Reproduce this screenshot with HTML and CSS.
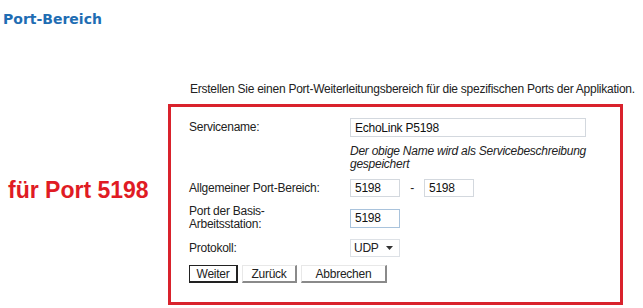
FILE: index.html
```html
<!DOCTYPE html>
<html lang="de">
<head>
  <meta charset="UTF-8">
  <title>Port-Bereich</title>
  <link rel="stylesheet" href="styles.css">
</head>
<body>
  <h1 class="page-title">Port-Bereich</h1>
  <p class="intro">Erstellen Sie einen Port-Weiterleitungsbereich für die spezifischen Ports der Applikation.</p>

  <div class="main">
    <div class="note-left">für Port 5198</div>

    <div class="highlight">
      <div class="form-grid">
        <label class="row-label">Servicename:</label>
        <input class="field field-wide" type="text" value="EchoLink P5198">

        <span></span>
        <p class="hint">Der obige Name wird als Servicebeschreibung gespeichert</p>

        <label class="row-label">Allgemeiner Port-Bereich:</label>
        <div class="range">
          <input class="field field-small" type="text" value="5198">
          <span class="dash">-</span>
          <input class="field field-small" type="text" value="5198">
        </div>

        <label class="row-label">Port der Basis-<br>Arbeitsstation:</label>
        <input class="field field-small field-focus" type="text" value="5198">

        <label class="row-label">Protokoll:</label>
        <div class="select">
          <span>UDP</span>
          <svg width="7" height="4" viewBox="0 0 7 4"><path d="M0 0h7L3.5 4z" fill="#333"/></svg>
        </div>
      </div>

      <div class="buttons">
        <button class="btn btn-default">Weiter</button>
        <button class="btn btn-zurueck">Zurück</button>
        <button class="btn btn-abbrechen">Abbrechen</button>
      </div>
    </div>
  </div>
</body>
</html>
```

FILE: styles.css
```css
body {
  margin: 0;
  font-family: "Liberation Sans", Arial, sans-serif;
  font-size: 12px;
  letter-spacing: -0.25px;
  color: #222;
  background-color: #fff;
}

.page-title {
  margin: 0;
  padding: 11px 0 0 3px;
  height: 19px;
  font-family: "DejaVu Sans", Verdana, sans-serif;
  font-size: 14px;
  font-weight: bold;
  letter-spacing: 0;
  color: #1f6db3;
}

.intro {
  margin: 52px 0 0 190px;
  line-height: 14px;
  white-space: nowrap;
}

.main {
  display: flex;
  margin-top: 8px;
}

.note-left {
  width: 160px;
  padding: 73px 0 0 8px;
  font-size: 23px;
  font-weight: bold;
  letter-spacing: 0;
  color: #e01b24;
}

.highlight {
  width: 431px;
  height: 184px;
  border: 3px solid #d9222c;
  padding: 11px 0 0 18px;
}

.form-grid {
  display: grid;
  grid-template-columns: 161px auto;
  grid-template-rows: 19px 26px 18px 26px 18px;
  row-gap: 8px;
  align-items: center;
}

.row-label {
  line-height: 13px;
}

.field {
  box-sizing: border-box;
  height: 19px;
  padding: 0 4px;
  border: 1px solid #d3d8de;
  font-family: "Liberation Sans", Arial, sans-serif;
  font-size: 12px;
  letter-spacing: -0.25px;
  color: #111;
  background-color: #fff;
}

.field-wide {
  width: 236px;
}

.field-small {
  width: 50px;
  height: 18px;
}

.field-focus {
  border-color: #a9c3dc;
  height: 19px;
}

.hint {
  margin: 0;
  font-style: italic;
  line-height: 13px;
  width: 240px;
}

.range {
  display: flex;
  align-items: center;
}

.dash {
  width: 24px;
  text-align: center;
}

.select {
  box-sizing: border-box;
  width: 50px;
  height: 18px;
  border: 1px solid #dde1e6;
  display: flex;
  align-items: center;
  justify-content: space-between;
  padding: 0 6px 0 3px;
}

.buttons {
  display: flex;
  gap: 4px;
  margin-top: 8px;
}

.btn {
  box-sizing: border-box;
  height: 18px;
  padding: 0;
  font-family: "Liberation Sans", Arial, sans-serif;
  font-size: 12px;
  letter-spacing: -0.25px;
  color: #222;
  background-color: #fff;
  border: 1px solid #e8e8e8;
  border-right: 2px solid #8a8a8a;
  border-bottom: 2px solid #8a8a8a;
}

.btn-default {
  width: 49px;
  border: 1px solid #222;
  border-right: 2px solid #222;
  border-bottom: 2px solid #222;
}

.btn-zurueck {
  width: 55px;
}

.btn-abbrechen {
  width: 86px;
}
```
